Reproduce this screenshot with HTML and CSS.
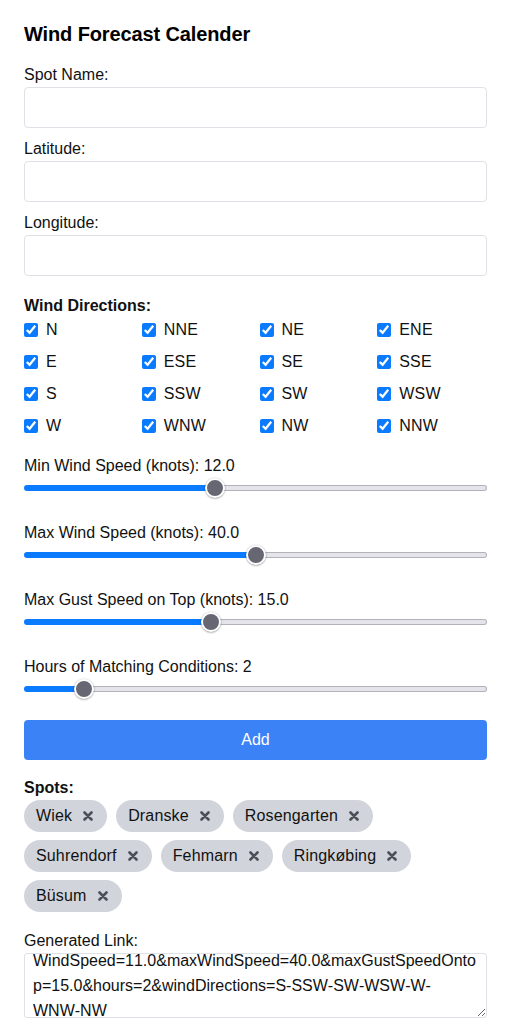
FILE: index.html
```html
<!DOCTYPE html>
<html lang="en">
<head>
<meta charset="utf-8">
<title>Wind Forecast Calender</title>
<link rel="stylesheet" href="styles.css">
</head>
<body>
<main class="app">
  <h1 class="title">Wind Forecast Calender</h1>

  <div class="field">
    <label class="label" for="spot">Spot Name:</label>
    <input class="text-input" id="spot" type="text">
  </div>
  <div class="field">
    <label class="label" for="lat">Latitude:</label>
    <input class="text-input" id="lat" type="text">
  </div>
  <div class="field">
    <label class="label" for="lon">Longitude:</label>
    <input class="text-input" id="lon" type="text">
  </div>

  <section class="directions">
    <div class="label strong">Wind Directions:</div>
    <div class="dir-grid">
      <label class="dir"><input type="checkbox" checked><span>N</span></label>
      <label class="dir"><input type="checkbox" checked><span>NNE</span></label>
      <label class="dir"><input type="checkbox" checked><span>NE</span></label>
      <label class="dir"><input type="checkbox" checked><span>ENE</span></label>
      <label class="dir"><input type="checkbox" checked><span>E</span></label>
      <label class="dir"><input type="checkbox" checked><span>ESE</span></label>
      <label class="dir"><input type="checkbox" checked><span>SE</span></label>
      <label class="dir"><input type="checkbox" checked><span>SSE</span></label>
      <label class="dir"><input type="checkbox" checked><span>S</span></label>
      <label class="dir"><input type="checkbox" checked><span>SSW</span></label>
      <label class="dir"><input type="checkbox" checked><span>SW</span></label>
      <label class="dir"><input type="checkbox" checked><span>WSW</span></label>
      <label class="dir"><input type="checkbox" checked><span>W</span></label>
      <label class="dir"><input type="checkbox" checked><span>WNW</span></label>
      <label class="dir"><input type="checkbox" checked><span>NW</span></label>
      <label class="dir"><input type="checkbox" checked><span>NNW</span></label>
    </div>
  </section>

  <div class="slider-field">
    <label class="label" for="minw">Min Wind Speed (knots): 12.0</label>
    <input class="range" id="minw" type="range" min="3" max="25" step="0.5" value="12" style="--p: 41.3%">
  </div>
  <div class="slider-field">
    <label class="label" for="maxw">Max Wind Speed (knots): 40.0</label>
    <input class="range" id="maxw" type="range" min="0" max="80" step="0.5" value="40" style="--p: 50.1%">
  </div>
  <div class="slider-field">
    <label class="label" for="gust">Max Gust Speed on Top (knots): 15.0</label>
    <input class="range" id="gust" type="range" min="5" max="30" step="0.5" value="15" style="--p: 40.4%">
  </div>
  <div class="slider-field">
    <label class="label" for="hours">Hours of Matching Conditions: 2</label>
    <input class="range" id="hours" type="range" min="1" max="10" step="1" value="2" style="--p: 13%">
  </div>

  <button class="add-btn" type="button">Add</button>

  <section class="spots">
    <div class="label strong">Spots:</div>
    <ul class="chips">
      <li class="chip"><span>Wiek</span><button class="chip-x" type="button" aria-label="Remove"><svg viewBox="0 0 10 10"><path d="M1.5 1.5L8.5 8.5M8.5 1.5L1.5 8.5"/></svg></button></li>
      <li class="chip"><span>Dranske</span><button class="chip-x" type="button" aria-label="Remove"><svg viewBox="0 0 10 10"><path d="M1.5 1.5L8.5 8.5M8.5 1.5L1.5 8.5"/></svg></button></li>
      <li class="chip"><span>Rosengarten</span><button class="chip-x" type="button" aria-label="Remove"><svg viewBox="0 0 10 10"><path d="M1.5 1.5L8.5 8.5M8.5 1.5L1.5 8.5"/></svg></button></li>
      <li class="chip"><span>Suhrendorf</span><button class="chip-x" type="button" aria-label="Remove"><svg viewBox="0 0 10 10"><path d="M1.5 1.5L8.5 8.5M8.5 1.5L1.5 8.5"/></svg></button></li>
      <li class="chip"><span>Fehmarn</span><button class="chip-x" type="button" aria-label="Remove"><svg viewBox="0 0 10 10"><path d="M1.5 1.5L8.5 8.5M8.5 1.5L1.5 8.5"/></svg></button></li>
      <li class="chip"><span>Ringkøbing</span><button class="chip-x" type="button" aria-label="Remove"><svg viewBox="0 0 10 10"><path d="M1.5 1.5L8.5 8.5M8.5 1.5L1.5 8.5"/></svg></button></li>
      <li class="chip"><span>Büsum</span><button class="chip-x" type="button" aria-label="Remove"><svg viewBox="0 0 10 10"><path d="M1.5 1.5L8.5 8.5M8.5 1.5L1.5 8.5"/></svg></button></li>
    </ul>
  </section>

  <div class="link-field">
    <label class="label" for="link">Generated Link:</label>
    <textarea class="link" id="link" readonly>WindSpeed=11.0&amp;maxWindSpeed=40.0&amp;maxGustSpeedOntop=15.0&amp;hours=2&amp;windDirections=S-SSW-SW-WSW-W-WNW-NW</textarea>
  </div>
</main>
<script src="script.js"></script>
</body>
</html>
```

FILE: styles.css
```css
* { box-sizing: border-box; }

html, body {
  margin: 0;
  background: #fff;
}

body {
  font-family: "Liberation Sans", Arial, sans-serif;
  font-size: 16px;
  color: #111;
}

.app {
  padding: 20px 20px 0 24px;
  display: flex;
  flex-direction: column;
}

.title {
  margin: 0 0 15px;
  font-size: 20px;
  line-height: 28px;
  font-weight: 700;
  letter-spacing: -0.12px;
  color: #000;
}

.label {
  display: block;
  line-height: 24px;
  font-size: 16px;
}

.strong { font-weight: 700; }

.field { margin-bottom: 9px; }

.text-input {
  display: block;
  width: 100%;
  height: 41px;
  border: 1px solid #dfe1e6;
  border-radius: 4px;
  padding: 0 10px;
  font: inherit;
  background: #fff;
}

.directions { margin-top: 9px; }

.dir-grid {
  display: grid;
  grid-template-columns: repeat(4, 1fr);
  column-gap: 8px;
  row-gap: 8px;
}

.dir {
  display: flex;
  align-items: center;
  gap: 8px;
  height: 24px;
  line-height: 24px;
  letter-spacing: 0.2px;
}

.dir input {
  margin: 0;
  width: 14px;
  height: 14px;
  accent-color: #0a7aff;
}

.slider-field { margin-top: 16px; }
.slider-field + .slider-field { margin-top: 23px; }

.range {
  -webkit-appearance: none;
  appearance: none;
  display: block;
  width: 100%;
  height: 20px;
  margin: 0;
  background: transparent;
}

.range::-webkit-slider-runnable-track {
  height: 6px;
  border-radius: 3px;
  background:
    linear-gradient(90deg, #0a7aff var(--p), transparent var(--p)),
    linear-gradient(#e4e4ea, #e4e4ea) content-box,
    #b2b2ba;
  padding: 1px;
}

.range::-webkit-slider-thumb {
  -webkit-appearance: none;
  appearance: none;
  width: 20px;
  height: 20px;
  margin-top: -8px;
  border-radius: 50%;
  background: #676774;
  border: 2px solid #fff;
  box-shadow: 0 0.5px 2px rgba(0, 0, 0, 0.45);
}

.add-btn {
  margin-top: 21px;
  height: 40px;
  width: 100%;
  border: 0;
  border-radius: 4px;
  background: #3b82f6;
  color: #fff;
  font: inherit;
  font-size: 16px;
}

.spots { margin-top: 16px; }

.chips {
  list-style: none;
  margin: 0;
  padding: 0;
  display: flex;
  flex-wrap: wrap;
  column-gap: 9px;
  row-gap: 8px;
}

.chip {
  display: flex;
  align-items: center;
  gap: 11px;
  height: 32px;
  padding: 0 14px 0 12px;
  border-radius: 16px;
  background: #d1d5db;
  color: #111;
  letter-spacing: 0.15px;
}

.chip-x {
  display: flex;
  padding: 0;
  border: 0;
  background: none;
}

.chip-x svg {
  width: 10px;
  height: 10px;
  fill: none;
  stroke: #4b4f57;
  stroke-width: 2.6;
  stroke-linecap: round;
}

.link-field { margin-top: 17px; }

.link {
  display: block;
  width: 100%;
  height: 65px;
  border: 1px solid #dfe1e6;
  border-radius: 3px;
  padding: 0 9px 2px 8px;
  font: inherit;
  font-size: 16px;
  font-kerning: none;
  line-height: 25px;
  color: #111;
  resize: vertical;
  overflow: hidden;
}
```

FILE: script.js
```js
// Keep the generated link scrolled a few pixels, as in the reference.
document.getElementById('link').scrollTop = 6;
```
